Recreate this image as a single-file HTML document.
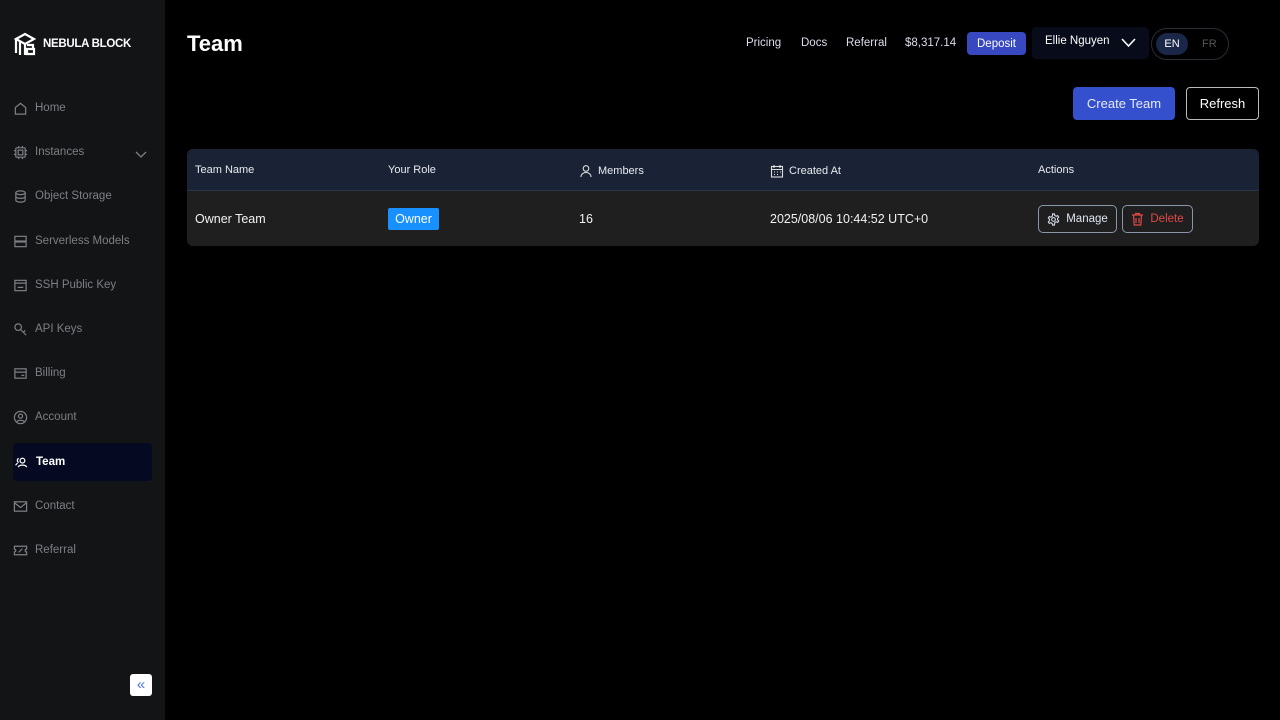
<!DOCTYPE html>
<html><head><meta charset="utf-8"><style>
*{box-sizing:border-box;margin:0;padding:0}
body{width:1280px;height:720px;background:#000;font-family:"Liberation Sans",sans-serif;color:#fff;position:relative;overflow:hidden}
.sb{position:absolute;left:0;top:0;width:165px;height:720px;background:#131416}
.logo{position:absolute;left:13px;top:31px;display:flex;align-items:center;gap:6px;font-weight:bold;font-size:11.5px;letter-spacing:-0.3px}
.nav{position:absolute;left:13px;width:139px;height:36px;display:flex;align-items:center;font-size:11.5px;color:#7d7f84}
.nav svg{width:15px;height:15px;margin-right:7px;stroke:#7d7f84;fill:none;stroke-width:1.3}
.nav.act{background:#050a22;border-radius:4px;color:#fff;font-weight:bold;left:13px}
.nav.act svg{stroke:#fff}
.t{position:absolute;font-size:11.5px;color:#dde}
.btn{position:absolute;border-radius:4px;font-size:12.5px;display:flex;align-items:center;justify-content:center}
.th{position:absolute;top:164px;font-size:11px;color:#e8eaf0;display:flex;align-items:center;gap:5px}
.td{position:absolute;font-size:12.5px;color:#f2f2f2}
</style></head><body>
<div class="sb">
<div class="logo"><svg width="24" height="26" viewBox="0 0 24 26" fill="none" stroke="#fff" stroke-width="2.2"><path d="M3 8 L12 3 L21 8 L12 13Z"/><path d="M3 8 V22 M7 10 V24 M12 13 V24"/><path d="M14 14 h6 v4 h-6 M14 18 h7 v5 h-7z"/></svg>NEBULA BLOCK</div>
<div class="nav" style="top:90px"><svg viewBox="0 0 16 16"><path d="M2.5 7 L8 2.5 L13.5 7 V14 H2.5Z"/></svg>Home</div>
<div class="nav" style="top:134px"><svg viewBox="0 0 16 16"><rect x="3" y="3" width="10" height="10" rx="1"/><rect x="5.5" y="5.5" width="5" height="5"/><path d="M1 6h2M1 10h2M13 6h2M13 10h2M6 1v2M10 1v2M6 13v2M10 13v2"/></svg>Instances<svg style="position:absolute;left:121px;width:14px;height:14px;top:13px" viewBox="0 0 14 14"><path d="M2 5l5 5 5-5"/></svg></div>
<div class="nav" style="top:178px"><svg viewBox="0 0 16 16"><ellipse cx="8" cy="4" rx="5" ry="2"/><path d="M3 4v8c0 1 2 2 5 2s5-1 5-2V4M3 8c0 1 2 2 5 2s5-1 5-2"/></svg>Object Storage</div>
<div class="nav" style="top:223px"><svg viewBox="0 0 16 16"><rect x="2" y="2.5" width="12" height="5"/><rect x="2" y="8.5" width="12" height="5"/></svg>Serverless Models</div>
<div class="nav" style="top:267px"><svg viewBox="0 0 16 16"><rect x="2" y="2.5" width="12" height="11"/><path d="M2 5.5h12M5 10h6"/></svg>SSH Public Key</div>
<div class="nav" style="top:311px"><svg viewBox="0 0 16 16"><circle cx="5.5" cy="5.5" r="3.5"/><path d="M8 8l6 6M11 11l2-2"/></svg>API Keys</div>
<div class="nav" style="top:355px"><svg viewBox="0 0 16 16"><rect x="2" y="3" width="12" height="10"/><path d="M2 6.5h12M9 10h3"/></svg>Billing</div>
<div class="nav" style="top:399px"><svg viewBox="0 0 16 16"><circle cx="8" cy="8" r="6.5"/><circle cx="8" cy="6.5" r="2.2"/><path d="M4 12.5c1-2 7-2 8 0"/></svg>Account</div>
<div class="nav act" style="top:443px;height:38px"><svg viewBox="0 0 16 16" style="margin-left:1px"><circle cx="9" cy="6" r="2.5"/><path d="M4.5 13c1-3 8-3 9 0M5 3.5a2.5 2.5 0 0 0 0 4.5M2 11c0-1 1-2 2-2"/></svg>Team</div>
<div class="nav" style="top:488px"><svg viewBox="0 0 16 16"><rect x="1.5" y="3" width="13" height="10"/><path d="M1.5 4l6.5 5 6.5-5"/></svg>Contact</div>
<div class="nav" style="top:532px"><svg viewBox="0 0 16 16"><path d="M1.5 3.5h13v3a1.5 1.5 0 0 0 0 3v3h-13v-3a1.5 1.5 0 0 0 0-3z"/><path d="M6 10l4-4"/></svg>Referral</div>
<div style="position:absolute;left:130px;top:674px;width:22px;height:22px;background:#fff;border-radius:3px;color:#4a74f0;font-size:15px;text-align:center;line-height:21px">«</div>
</div>
<div style="position:absolute;left:187px;top:31px;font-size:22px;font-weight:bold">Team</div>
<div class="t" style="left:746px;top:37px">Pricing</div>
<div class="t" style="left:801px;top:37px">Docs</div>
<div class="t" style="left:846px;top:37px">Referral</div>
<div class="t" style="left:905px;top:37px">$8,317.14</div>
<div class="btn" style="left:967px;top:32px;width:59px;height:23px;background:#3848c0;font-size:11.5px">Deposit</div>
<div class="btn" style="left:1032px;top:27px;width:117px;height:32px;background:#070b1a;font-size:11.5px;justify-content:flex-start;padding-left:13px;align-items:flex-start;padding-top:8px">Ellie Nguyen<svg style="position:absolute;left:88px;top:10px" width="17" height="12" viewBox="0 0 17 12" fill="none" stroke="#fff" stroke-width="1.6"><path d="M2 2l6.5 7 6.5-7"/></svg></div>
<div style="position:absolute;left:1151px;top:28px;width:78px;height:32px;border:1px solid #2a2d35;border-radius:16px"></div>
<div class="btn" style="left:1156px;top:33px;width:32px;height:22px;border-radius:11px;background:#1a2748;font-size:11px">EN</div>
<div class="t" style="left:1202px;top:38px;font-size:11px;color:#555">FR</div>
<div class="btn" style="left:1073px;top:87px;width:102px;height:33px;background:#3450cc;font-size:13px;color:#e6eaff">Create Team</div>
<div class="btn" style="left:1186px;top:87px;width:73px;height:33px;border:1px solid #bbb;font-size:13px">Refresh</div>
<div style="position:absolute;left:187px;top:149px;width:1072px;height:97px;border-radius:6px;overflow:hidden;background:#1f1f1f"><div style="height:42px;background:#1a2335;border-bottom:1px solid #2a3548"></div></div>
<div class="th" style="left:195px">Team Name</div>
<div class="th" style="left:388px">Your Role</div>
<div class="th" style="left:579px"><svg width="14" height="14" viewBox="0 0 14 14" fill="none" stroke="#ddd" stroke-width="1.1"><circle cx="7" cy="4.5" r="2.8"/><path d="M2 13c0-3 2.5-4.5 5-4.5s5 1.5 5 4.5"/></svg>Members</div>
<div class="th" style="left:770px"><svg width="14" height="14" viewBox="0 0 14 14" fill="none" stroke="#ddd" stroke-width="1.1"><rect x="1.5" y="2.5" width="11" height="10.5"/><path d="M1.5 5.5h11M4 1v3M10 1v3M4 8h1M7 8h1M10 8h1M4 10.5h1M7 10.5h1"/></svg>Created At</div>
<div class="th" style="left:1038px">Actions</div>
<div class="td" style="left:195px;top:212px">Owner Team</div>
<div class="btn" style="left:388px;top:208px;width:51px;height:22px;background:#1890ff;border-radius:2px;font-size:12.5px">Owner</div>
<div class="td" style="left:579px;top:212px">16</div>
<div class="td" style="left:770px;top:212px">2025/08/06 10:44:52 UTC+0</div>
<div class="btn" style="left:1038px;top:205px;width:79px;height:28px;border:1px solid #8a96a8;border-radius:5px;font-size:11.5px;color:#dfe6f2;gap:6px"><svg width="13" height="13" viewBox="0 0 14 14" fill="none" stroke="#dfe6f2" stroke-width="1.1"><circle cx="7" cy="7" r="2"/><path d="M6 1h2l.4 1.7 1.5.8 1.6-.7 1.1 1.6-1.2 1.3v1.6l1.2 1.3-1.1 1.6-1.6-.7-1.5.8L8 13H6l-.4-1.7-1.5-.8-1.6.7-1.1-1.6L2.6 8.3V6.7L1.4 5.4l1.1-1.6 1.6.7 1.5-.8z"/></svg>Manage</div>
<div class="btn" style="left:1122px;top:205px;width:71px;height:28px;border:1px solid #8a96a8;border-radius:5px;font-size:11.5px;color:#e04848;gap:6px"><svg width="13" height="14" viewBox="0 0 13 14" fill="none" stroke="#e04848" stroke-width="1.2"><path d="M1 3h11M4.5 3V1.5h4V3M2.5 3l.7 10h6.6l.7-10M5 6v5M8 6v5"/></svg>Delete</div>
</body></html>
